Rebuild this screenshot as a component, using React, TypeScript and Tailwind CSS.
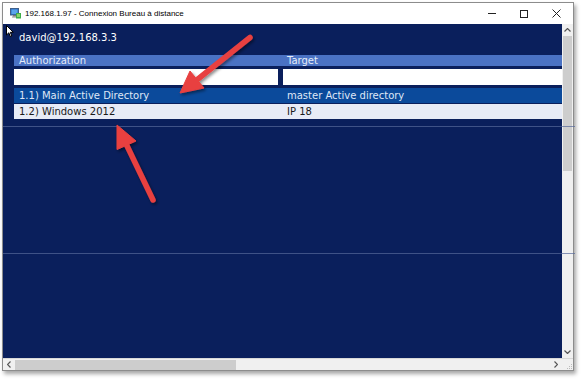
import React from "react";

const NAVY = "bg-[#0a1f5c]";

function RdpIcon() {
  return (
    <svg width="11" height="11" viewBox="0 0 11 11">
      <rect x="0.5" y="0.5" width="8" height="6.5" fill="#2a6fc9" stroke="#40608a" strokeWidth="1" />
      <rect x="1.5" y="1.5" width="6" height="4.5" fill="#5aa4ea" />
      <rect x="3" y="7" width="3" height="1.5" fill="#777" />
      <rect x="2" y="8.5" width="5" height="1" fill="#888" />
      <rect x="6" y="5" width="5" height="5.5" fill="#3fae49" />
      <rect x="7" y="6" width="3" height="3" fill="#8ad46a" />
    </svg>
  );
}

function Cursor() {
  return (
    <svg width="8" height="13" viewBox="0 0 8 13" className="absolute left-[6px] top-[25px]">
      <path d="M0.5 0.5 L0.5 10 L2.8 7.8 L4.4 11.6 L5.8 11 L4.3 7.3 L7.3 7.3 Z" fill="#ffffff" stroke="#000" strokeWidth="1" strokeLinejoin="round" />
    </svg>
  );
}

function Arrows() {
  return (
    <svg width="583" height="380" viewBox="0 0 583 380" className="absolute left-0 top-0 pointer-events-none">
      <defs>
        <filter id="sh" x="-20%" y="-20%" width="140%" height="140%">
          <feDropShadow dx="1.5" dy="2" stdDeviation="1.5" floodColor="#000" floodOpacity="0.45" />
        </filter>
      </defs>
      <g filter="url(#sh)" fill="#e8403f" stroke="#e8403f">
        <line x1="250" y1="37.5" x2="198" y2="79" strokeWidth="5.5" strokeLinecap="round" />
        <polygon points="180,93 204,88 190,71" strokeWidth="1" strokeLinejoin="round" />
        <line x1="153" y1="200" x2="126.5" y2="144.8" strokeWidth="5.5" strokeLinecap="round" />
        <polygon points="117,125 136,141 117,149.5" strokeWidth="1" strokeLinejoin="round" />
      </g>
    </svg>
  );
}

export default function App() {
  const mono = { fontFamily: '"DejaVu Sans", Verdana, sans-serif' };
  return (
    <div className="relative w-[583px] h-[380px] bg-white overflow-hidden pl-[2px] pt-[2px]">
      <div className="flex flex-col w-[572px] h-[369px] border border-[#8c8c8c] shadow-[2px_3px_4px_rgba(0,0,0,0.35)] bg-white">
        {/* title bar */}
        <div className="h-[21px] flex items-center bg-white" style={{ fontFamily: '"Liberation Sans", Arial, sans-serif' }}>
          <div className="ml-[7px] mr-[4px] flex items-center"><RdpIcon /></div>
          <div className="text-[8px] text-[#000]">192.168.1.97 - Connexion Bureau à distance</div>
          <div className="ml-auto flex items-center h-full">
            <div className="w-[32px] h-full flex items-center justify-center">
              <div className="w-[8px] h-[1px] bg-[#222]" />
            </div>
            <div className="w-[32px] h-full flex items-center justify-center">
              <div className="w-[8px] h-[8px] border border-[#222]" />
            </div>
            <div className="w-[32px] h-full flex items-center justify-center mr-[1px]">
              <svg width="9" height="9" viewBox="0 0 9 9"><path d="M0.5 0.5 L8.5 8.5 M8.5 0.5 L0.5 8.5" stroke="#222" strokeWidth="1" /></svg>
            </div>
          </div>
        </div>
        {/* body */}
        <div className="flex flex-1 min-h-0">
          <div className={`flex-1 ${NAVY} pt-[6px] pl-[11px]`} style={mono}>
            <div className="text-[10px] text-white leading-[16px] pl-[5px] h-[25px]">david@192.168.3.3</div>
            <div className="grid grid-cols-[267px_1fr]">
              <div className="h-[11px] bg-[#4a72c4] text-[10px] leading-[11px] text-[#e6ecf8] pl-[5px]">Authorization</div>
              <div className="h-[11px] bg-[#4a72c4] text-[10px] leading-[11px] text-[#e6ecf8] pl-[6px]">Target</div>
              <div className="pt-[3px] pb-[3px] pr-[3px]"><div className="h-[16px] bg-white" /></div>
              <div className="pt-[3px] pb-[3px] pl-[2px]"><div className="h-[16px] bg-white" /></div>
              <div className="h-[15px] bg-[#0b4a9b] text-[10px] leading-[15px] text-[#dfe7f6] pl-[5px]">1.1) Main Active Directory</div>
              <div className="h-[15px] bg-[#0b4a9b] text-[10px] leading-[15px] text-[#dfe7f6] pl-[6px]">master Active directory</div>
              <div className="mt-[1px] h-[15px] bg-[#e7ebf6] text-[10px] leading-[15px] text-[#1a1a1a] pl-[5px]">1.2) Windows 2012</div>
              <div className="mt-[1px] h-[15px] bg-[#e7ebf6] text-[10px] leading-[15px] text-[#1a1a1a] pl-[6px]">IP 18</div>
            </div>
          </div>
          {/* vertical scrollbar */}
          <div className="w-[11px] bg-[#f0f0f0] flex flex-col items-center">
            <div className="h-[12px] flex items-center justify-center">
              <svg width="7" height="4" viewBox="0 0 7 4"><path d="M0.5 3.5 L3.5 0.5 L6.5 3.5" stroke="#555" strokeWidth="1.2" fill="none" /></svg>
            </div>
            <div className="w-[9px] h-[135px] bg-[#cdcdcd]" />
            <div className="flex-1" />
            <div className="h-[12px] flex items-center justify-center">
              <svg width="7" height="4" viewBox="0 0 7 4"><path d="M0.5 0.5 L3.5 3.5 L6.5 0.5" stroke="#555" strokeWidth="1.2" fill="none" /></svg>
            </div>
          </div>
        </div>
        {/* horizontal scrollbar */}
        <div className="h-[12px] flex items-center bg-[#f0f0f0] border-t border-[#d8d8d8]">
          <div className="w-[12px] flex items-center justify-center">
            <svg width="4" height="7" viewBox="0 0 4 7"><path d="M3.5 0.5 L0.5 3.5 L3.5 6.5" stroke="#555" strokeWidth="1.2" fill="none" /></svg>
          </div>
          <div className="w-[221px] h-[10px] bg-[#cdcdcd]" />
          <div className="flex-1" />
          <div className="w-[12px] flex items-center justify-center">
            <svg width="4" height="7" viewBox="0 0 4 7"><path d="M0.5 0.5 L3.5 3.5 L0.5 6.5" stroke="#555" strokeWidth="1.2" fill="none" /></svg>
          </div>
          <div className="w-[11px] h-full flex items-end justify-end">
            <svg width="7" height="7" viewBox="0 0 7 7"><g fill="#bbb"><rect x="5" y="1" width="1" height="1" /><rect x="3" y="3" width="1" height="1" /><rect x="5" y="3" width="1" height="1" /><rect x="1" y="5" width="1" height="1" /><rect x="3" y="5" width="1" height="1" /><rect x="5" y="5" width="1" height="1" /></g></svg>
          </div>
        </div>
      </div>
      {/* faint artifact lines across the remote window */}
      <div className="absolute left-[3px] top-[126px] w-[572px] h-[1px] bg-[#56689a] opacity-70" />
      <div className="absolute left-[3px] top-[253px] w-[572px] h-[1px] bg-[#56689a] opacity-70" />
      <Cursor />
      <Arrows />
    </div>
  );
}
